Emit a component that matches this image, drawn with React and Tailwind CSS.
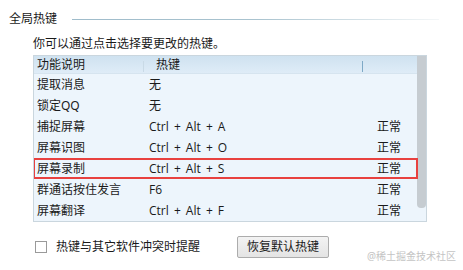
import React from 'react';

const rows = [
    { name: '提取消息', key: '无', status: '' },
    { name: '锁定QQ', key: '无', status: '' },
    { name: '捕捉屏幕', key: 'Ctrl + Alt + A', status: '正常' },
    { name: '屏幕识图', key: 'Ctrl + Alt + O', status: '正常' },
    { name: '屏幕录制', key: 'Ctrl + Alt + S', status: '正常', marked: true },
    { name: '群通话按住发言', key: 'F6', status: '正常' },
    { name: '屏幕翻译', key: 'Ctrl + Alt + F', status: '正常' },
];

const font = { fontFamily: '"Noto Sans", "Noto Sans CJK SC", sans-serif' };
const keyFont = { fontFamily: '"Open Sans", "Noto Sans CJK SC", sans-serif' };

export default function App() {
    return (
        <div className="w-[463px] h-[270px] bg-white overflow-hidden text-[12px] text-[#1a1a1a] leading-none" style={font}>
            {/* 标题 + 分隔线 */}
            <div className="flex items-center h-[16px] mt-[11px] ml-[9px] mr-[24px]">
                <span>全局热键</span>
                <div className="flex-1 h-px ml-[15px] bg-gradient-to-r from-[#9fbccb] via-[#a9c3cf] to-[#f4f7f8]" />
            </div>

            <p className="ml-[33px] mt-[11px] h-[14px]">你可以通过点击选择要更改的热键。</p>

            {/* 热键表 */}
            <div className="ml-[33px] mt-[3px] w-[394px] h-[167px] flex border border-[#cad6de] bg-[#edf5fc] overflow-hidden">
                <div className="flex-1 flex flex-col">
                    <div className="h-[21px] flex items-center bg-gradient-to-b from-[#cfe2f0] to-[#dfecf7] border-b border-[#d6e4ef]">
                        <div className="w-[110px] pl-[3px] relative h-full flex items-center">
                            功能说明
                            <span className="absolute right-0 top-[5px] h-[11px] w-px bg-[#c9dae6]" />
                        </div>
                        <div className="w-[219px] pl-[12px] relative h-full flex items-center">
                            热键
                            <span className="absolute right-0 top-[5px] h-[11px] w-px bg-[#7ea9c6]" />
                        </div>
                        <div className="flex-1" />
                    </div>
                    {rows.map((r) => (
                        <div key={r.name} className="h-[21px] shrink-0 flex items-center relative">
                            <div className="w-[110px] pl-[3px] whitespace-nowrap">{r.name}</div>
                            <div className="w-[219px] pl-[5px] whitespace-nowrap [word-spacing:2px]" style={keyFont}>{r.key}</div>
                            <div className="flex-1 pl-[14px]">{r.status}</div>
                            {r.marked && (
                                <div className="absolute left-[-1px] right-[-1px] top-0 bottom-0 border-2 border-[#e8413f]" />
                            )}
                        </div>
                    ))}
                </div>
                {/* 滚动条 */}
                <div className="w-[9px] flex flex-col">
                    <div className="h-[152px] bg-[#c6ccd1] rounded-b-[4px]" />
                </div>
            </div>

            {/* 底部 */}
            <div className="flex items-center mt-[14px] ml-[35px] h-[22px] whitespace-nowrap">
                <div className="w-[12px] h-[12px] shrink-0 border border-[#9a9a9a] bg-white" />
                <span className="ml-[9px] shrink-0">热键与其它软件冲突时提醒</span>
                <button className="ml-[37px] shrink-0 w-[92px] h-[22px] border border-[#acacac] rounded-[2px] bg-gradient-to-b from-[#f3f3f3] to-[#e4e4e4] text-[12px] text-[#1a1a1a]" style={font}>
                    恢复默认热键
                </button>
                <span className="ml-[38px] mt-[17px] shrink-0 text-[10px] text-[#c4c4c4]">@稀土掘金技术社区</span>
            </div>
        </div>
    );
}
